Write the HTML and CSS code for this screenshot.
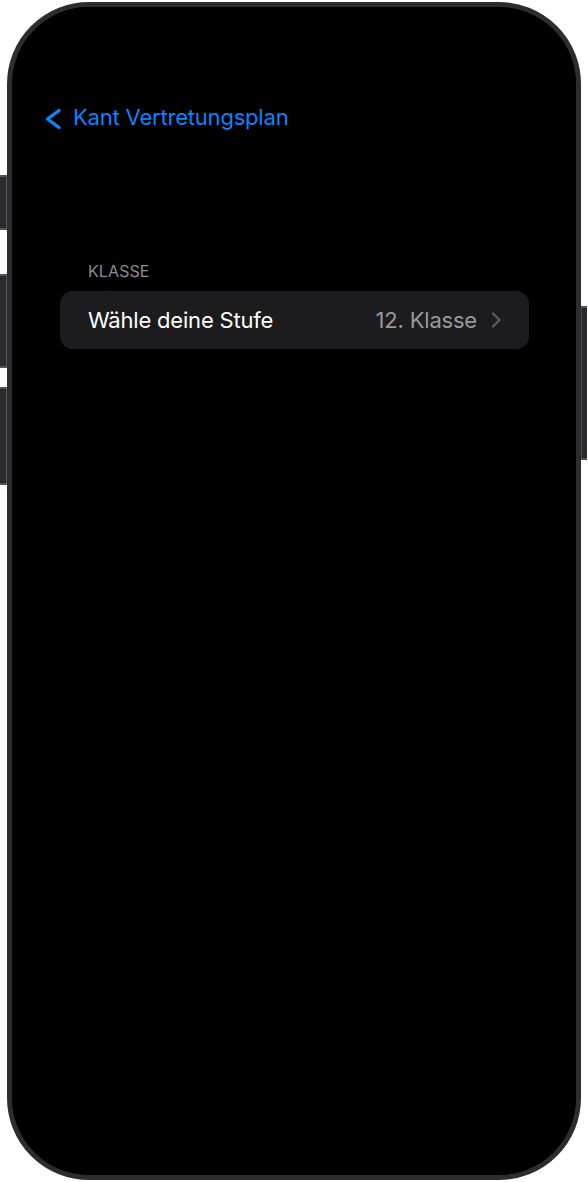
FILE: index.html
```html
<!DOCTYPE html>
<html lang="de">
<head>
<meta charset="utf-8">
<title>Kant Vertretungsplan – Klasse</title>
<link rel="stylesheet" href="styles.css">
</head>
<body>
<div class="device">
  <div class="rail rail-left">
    <span class="hwbtn hw-action"></span>
    <span class="hwbtn hw-volup"></span>
    <span class="hwbtn hw-voldown"></span>
  </div>
  <div class="phone">
    <div class="screen">
      <nav class="navbar">
        <a class="back" href="#">
          <svg class="back-chevron" width="20" height="22" viewBox="0 0 20 22" aria-hidden="true">
            <path d="M16 2.5 L4.5 11 L16 19.5" fill="none" stroke="currentColor" stroke-width="3.4" stroke-linecap="round" stroke-linejoin="round"/>
          </svg>
          <span class="back-label">Kant Vertretungsplan</span>
        </a>
      </nav>
      <section class="group">
        <h2 class="group-header">KLASSE</h2>
        <div class="cell">
          <span class="cell-title">Wähle deine Stufe</span>
          <span class="cell-value">12. Klasse</span>
          <svg class="cell-chevron" width="12" height="18" viewBox="0 0 12 18" aria-hidden="true">
            <path d="M3 2.5 L9.5 9 L3 15.5" fill="none" stroke="currentColor" stroke-width="2.4" stroke-linecap="round" stroke-linejoin="round"/>
          </svg>
        </div>
      </section>
    </div>
  </div>
  <div class="rail rail-right">
    <span class="hwbtn hw-power"></span>
  </div>
</div>
</body>
</html>
```
FILE: styles.css
```css
* { box-sizing: border-box; }
html, body {
  margin: 0;
  padding: 0;
  background: #ffffff;
}
body {
  width: 588px;
  height: 1182px;
  overflow: hidden;
  font-family: Inter, "Noto Sans", "DejaVu Sans", sans-serif;
}
.device {
  display: flex;
  align-items: flex-start;
  width: 588px;
  height: 1182px;
}
.rail {
  width: 7px;
  display: flex;
  flex-direction: column;
  flex-shrink: 0;
}
.rail-right {
  width: 7px;
}
.hwbtn {
  display: block;
  width: 7px;
  background: #2b2b2d;
  border-top: 2px solid #4d5560;
  border-bottom: 2px solid #4d5560;
  border-right: 1px solid #5a5a5e;
}
.hw-action { margin-top: 175px; height: 55px; }
.hw-volup { margin-top: 44px; height: 94px; }
.hw-voldown { margin-top: 19px; height: 98px; }
.rail-right .hwbtn {
  width: 6px;
  border-right: none;
  border-left: 1px solid #4a4a4e;
}
.hw-power { margin-top: 306px; height: 154px; }

.phone {
  width: 574px;
  height: 1178px;
  margin-top: 2px;
  flex-shrink: 0;
  border: 5px solid #2d2d2f;
  border-radius: 82px;
  background: #000;
  overflow: hidden;
}
.screen {
  height: 100%;
  border-radius: 77px;
  background: #000;
  padding-top: 96px;
}
.navbar {
  display: flex;
  padding-left: 31px;
  height: 28px;
}
.back {
  display: flex;
  align-items: center;
  gap: 10px;
  color: #0a84ff;
  text-decoration: none;
}
.back-chevron {
  display: block;
  margin-top: 4px;
}
.back-label {
  font-size: 22px;
  line-height: 28px;
  letter-spacing: -0.2px;
}
.group {
  margin-top: 130px;
}
.group-header {
  margin: 0;
  padding-left: 76px;
  font-size: 16px;
  line-height: 20px;
  font-weight: 400;
  color: #8d8d93;
  letter-spacing: 0.1px;
}
.cell {
  display: flex;
  align-items: center;
  margin: 10px 47px 0 48px;
  height: 58px;
  padding: 0 27px 0 28px;
  background: #1c1c1e;
  border-radius: 13px;
}
.cell-title {
  flex: 1;
  font-size: 22px;
  line-height: 28px;
  color: #ffffff;
  letter-spacing: -0.2px;
}
.cell-value {
  font-size: 22px;
  line-height: 28px;
  color: #98989e;
  letter-spacing: -0.2px;
  margin-right: 13px;
}
.cell-chevron {
  display: block;
  color: #5c5c60;
}
```
